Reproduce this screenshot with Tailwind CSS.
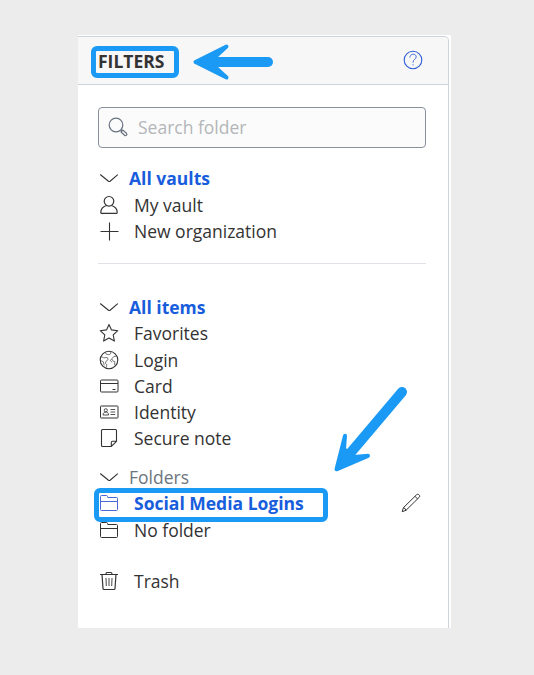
<!DOCTYPE html>
<html lang="en">
<head>
<meta charset="utf-8">
<title>Filters</title>
<script src="https://cdn.jsdelivr.net/npm/@tailwindcss/browser@4"></script>
</head>
<body class="relative h-[675px] w-[534px] overflow-hidden bg-[#ececec] pt-[35px] pl-[78px] font-['Open_Sans',sans-serif] text-[17.5px] leading-[26px] text-[#333]">
<main class="h-[593px] w-[373px] bg-white pt-px">
  <section class="h-[592px] w-[371px] rounded-tr-[5px] border-t border-r border-[#ced4dc] bg-white">
    <header class="flex h-12 items-center justify-between rounded-tr-[4px] border-b border-[#ced4dc] bg-[#f7f7f7] pr-[25px] pb-px pl-5">
      <h1 class="pt-px text-[17.5px] font-bold">FILTERS</h1>
      <svg class="size-5" viewBox="0 0 20 20" fill="none" stroke="#2f60d8" stroke-width="1.1" stroke-linecap="round"><circle cx="10" cy="10" r="8.8"/><path stroke-width=".9" d="M6.9 7.2c0-4 6.3-4 6.3-.3 0 2.6-3.2 2.1-3.2 5.3M10 14.6v.4"/></svg>
    </header>
    <div class="pr-[22px] pl-5 pt-[22px]">
      <div class="flex h-[41px] items-center rounded-[4px] border border-[#87919d] bg-[#fbfbfb] pb-px pl-[9px] text-[#b3b6b9]">
        <svg class="mr-[10px] size-5" viewBox="0 0 20 20" fill="none" stroke="#66717e" stroke-width="1.2"><circle cx="8" cy="8" r="6.8"/><path d="m12.8 12.8 1.1 1.1M13 15l1.8-2 3.6 3.3c1.2 1.2-.5 3-1.8 1.9z"/></svg>
        <span>Search folder</span>
      </div>
      <ul class="mt-[16.5px]">
        <li class="flex h-[27.25px] items-center font-bold text-[#175ddc]"><svg class="mr-[10px] ml-px size-5" viewBox="0 0 20 20" fill="none" stroke="#333" stroke-width="1.1" stroke-linecap="round"><path d="M1.5 6.8 9.5 13.2q.8.6 1.6 0L18.5 6.8"/></svg>All vaults</li>
        <li class="flex h-[26.25px] items-center"><svg class="mr-[15px] ml-px size-5" viewBox="0 0 20 20" fill="none" stroke="#333" stroke-width="1.2"><circle cx="10" cy="6.3" r="4.8"/><path d="M7.5 10.5C4 11.6 1.8 14 1.8 17.4q0 1 1 1h14.4q1 0 1-1c0-3.4-2.2-5.8-5.7-6.9"/></svg>My vault</li>
        <li class="flex h-[26.25px] items-center"><svg class="mr-[15px] ml-px size-5" viewBox="0 0 20 20" fill="none" stroke="#333" stroke-width="1.1"><path d="M1.5 10.5h18M10.5 1.5v18"/></svg>New organization</li>
      </ul>
      <hr class="mt-[18.5px] border-[#dfe2e6]">
      <ul class="mt-[30px]">
        <li class="flex h-[26.25px] items-center font-bold text-[#175ddc]"><svg class="mr-[10px] ml-px size-5" viewBox="0 0 20 20" fill="none" stroke="#333" stroke-width="1.1" stroke-linecap="round"><path d="M1.5 6.8 9.5 13.2q.8.6 1.6 0L18.5 6.8"/></svg>All items</li>
        <li class="flex h-[26.25px] items-center"><svg class="mr-[15px] ml-px size-5" viewBox="0 0 20 20" fill="none" stroke="#333" stroke-width="1.1" stroke-linejoin="round"><path d="m10 1.5 2.5 5.4 6.3.8-4.6 4.2 1.2 6.2-5.4-3-5.4 3 1.2-6.2L1.2 7.7l6.3-.8z"/></svg>Favorites</li>
        <li class="flex h-[26.75px] items-center"><svg class="mr-[15px] ml-px size-5" viewBox="0 0 20 20" fill="none" stroke="#333" stroke-width="1"><circle cx="10" cy="10" r="8.8" stroke-width="1.1"/><path stroke-width=".65" d="M6.5 2.2 7 4l3 .8 2-1.5-.5-1.8M2 6.6l2.800 1.200 3.600-.2.7 2.100-2 1.400-.7 2.300 1.500 1.300-.8 2.800M1.600 10.400l2.800 1.500.8 3.600M17.500 6l-3 .7-1.700 2.200 1.300 2.200 1.800.6-.4 3 1 .4M12.700 9l-1.500 1.600 2.100 1.800"/></svg>Login</li>
        <li class="flex h-[26.25px] items-center"><svg class="mr-[15px] ml-px size-5" viewBox="0 0 20 20" fill="none" stroke="#333" stroke-width="1"><rect x="1.5" y="4" width="17.5" height="12" rx="1"/><path d="M1.5 7.5h17.5M13.5 13.500h3"/></svg>Card</li>
        <li class="flex h-[26.25px] items-center"><svg class="mr-[15px] ml-px size-5" viewBox="0 0 20 20" fill="none" stroke="#333" stroke-width="1"><rect x="1.5" y="4" width="17.5" height="12" rx=".6"/><g stroke-width=".85"><circle cx="6.8" cy="8.3" r="1.6"/><path d="M4 13c0-4 5.600-4 5.600 0zM11.500 7.500h4.700M11.500 10h4.700M11.500 12.500h4.700"/></g></svg>Identity</li>
        <li class="flex h-[25.25px] items-center"><svg class="mr-[15px] ml-px size-5" viewBox="0 0 20 20" fill="none" stroke="#333" stroke-width="1.1"><path d="M3.500 1.500h13q1 0 1 1v10.800l-5.200 5.200H3.500q-1 0-1-1v-15q0-1 1-1zM12.300 18.500v-4q0-1.200 1.200-1.200h4"/></svg>Secure note</li>
      </ul>
      <ul class="mt-[13.5px]">
        <li class="flex h-[26.25px] items-center text-[#6c757d]"><svg class="mr-[10px] ml-px size-5" viewBox="0 0 20 20" fill="none" stroke="#333" stroke-width="1.1" stroke-linecap="round"><path d="M1.5 6.8 9.5 13.2q.8.6 1.6 0L18.5 6.8"/></svg>Folders</li>
        <li class="flex h-[25.5px] items-center font-bold text-[#175ddc]"><svg class="mr-[15px] ml-px size-5" viewBox="0 0 20 20" fill="none" stroke="#4b68d8" stroke-width="1"><path d="M1.5 16.500v-13q0-1 1-1h5q.8 0 1 .9l.3 1.100h8.700q1 0 1 1v11q0 1-1 1h-15q-1 0-1-1zM1.500 8.500h17"/></svg><span>Social Media Logins</span>
          <svg class="mr-[5px] ml-auto size-5" viewBox="0 0 20 20" fill="none" stroke="#333" stroke-width="1"><path d="m1.200 18.700 1.200-4L15.500 1.800c1.700-1.600 4.300.8 2.600 2.600L5 17.300zM2.400 14.700q2.100.4 2.600 2.600M14 3.300l2.500 2.600"/></svg></li>
        <li class="mt-px flex h-[26.25px] items-center"><svg class="mr-[15px] ml-px size-5" viewBox="0 0 20 20" fill="none" stroke="#333" stroke-width="1"><path d="M1.500 16.500v-13q0-1 1-1h5q.8 0 1 .9l.3 1.100h8.700q1 0 1 1v11q0 1-1 1h-15q-1 0-1-1zM1.500 8.500h17"/></svg>No folder</li>
      </ul>
      <div class="mt-[24.5px] flex h-[26.25px] items-center"><svg class="mr-[15px] ml-px size-5" viewBox="0 0 20 20" fill="none" stroke="#333" stroke-width="1.2"><path d="M1 3.500h18M7 3.200q0-1.700 1.200-1.700h3.600q1.200 0 1.200 1.700M3 3.500l1 14q.1 1 1 1h10q.9 0 1-1l1-14"/><path stroke-width=".9" d="m7 7 .3 8M10 7v8M13 7l-.3 8"/></svg>Trash</div>
    </div>
  </section>
</main>
<!-- Callout annotations over the panel -->
<div class="absolute top-[46px] left-[91px] h-8 w-[88px] rounded-[6px] border-5 border-[#1a9af5]"></div>
<div class="absolute top-[488px] left-[94px] h-[34px] w-[234px] rounded-[6px] border-5 border-[#1a9af5]"></div>
<svg class="pointer-events-none absolute inset-0 h-[675px] w-[534px]" viewBox="0 0 534 675" fill="#1a9af5" stroke="#1a9af5" stroke-linecap="round" stroke-linejoin="round">
  <path stroke-width="10" d="M212 62H268"/>
  <path stroke-width="4" d="M226.500 46.500 195.500 62l31 15.500L214 66v-8z"/>
  <path stroke-width="10" d="M402 392 347 457"/>
  <path stroke-width="4" d="M345 435.800 336.500 469.300 368 455.800 354 457 344 449z"/>
</svg>
</body>
</html>
